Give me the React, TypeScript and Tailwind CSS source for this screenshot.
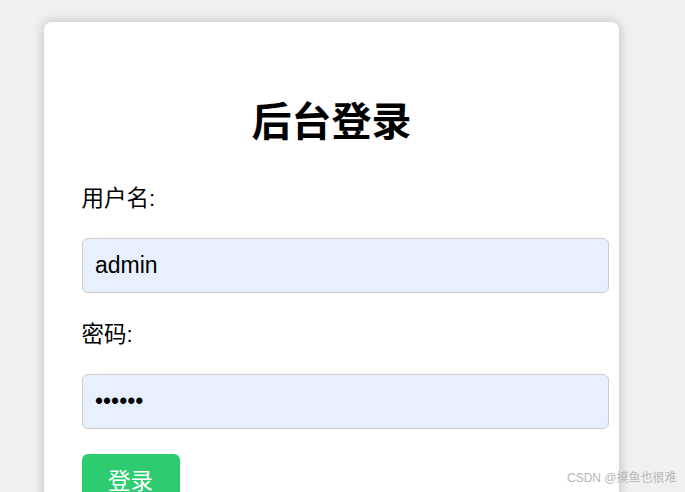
import React from "react";

export default function App() {
  const font = { fontFamily: '"Liberation Sans", Arial, "Noto Sans CJK SC", sans-serif' };
  return (
    <div className="relative min-h-screen h-[492px] overflow-hidden bg-[#f0f0f0]" style={font}>
      <div className="ml-[44px] mt-[22px] w-[575px] h-[600px] rounded-[8px] bg-white px-[37.5px] pt-[37.5px] shadow-[0_0_12px_rgba(0,0,0,0.22)]">
        <h2 className="mt-[32px] h-[60px] text-center text-[40px] font-bold leading-[60px] text-black">后台登录</h2>
        <label className="mt-[32.5px] block h-[30px] text-[22.5px] leading-[30px] text-black">用户名:</label>
        <input
          type="text"
          defaultValue="admin"
          className="mt-[24px] block h-[55px] w-[527px] rounded-[6px] border border-[#cccccc] bg-[#e8f0fe] px-[12.5px] text-[23px] leading-[28px] text-black outline-none"
        />
        <label className="mt-[26.5px] block h-[30px] text-[22.5px] leading-[30px] text-black">密码:</label>
        <input
          type="password"
          defaultValue="123456"
          className="mt-[24.5px] block h-[55px] w-[527px] rounded-[6px] border border-[#cccccc] bg-[#e8f0fe] px-[12.5px] text-[23px] leading-[28px] text-black outline-none"
        />
        <button className="mt-[25px] block h-[56px] w-[98px] rounded-[6px] bg-[#2ecc71] text-center text-[22.5px] leading-[30px] text-white">
          登录
        </button>
      </div>
      <div className="absolute left-[567px] top-[469px] whitespace-nowrap text-[12px] leading-[18px] text-[#b8b8b8]">
        CSDN @摸鱼也很难
      </div>
    </div>
  );
}
